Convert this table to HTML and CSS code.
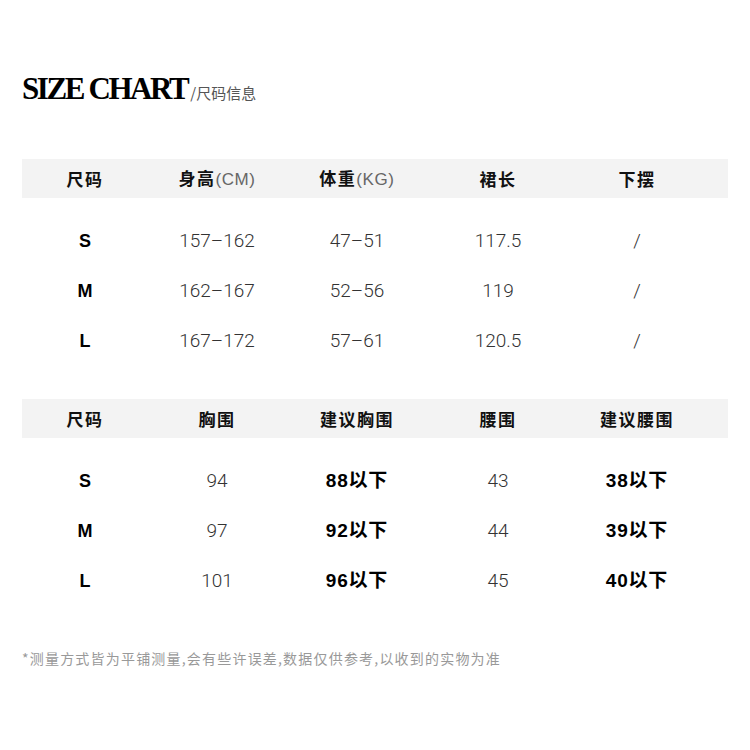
FILE: index.html
```html
<!DOCTYPE html>
<html lang="zh">
<head>
<meta charset="utf-8">
<title>Size Chart</title>
<link rel="stylesheet" href="styles.css">
</head>
<body>
<div class="page">
  <h1 class="title"><span class="title-en">SIZE CHART</span><span class="title-cn">/尺码信息</span></h1>

  <div class="table t1">
    <div class="row head">
      <div class="c">尺码</div>
      <div class="c">身高<span class="unit">(CM)</span></div>
      <div class="c">体重<span class="unit">(KG)</span></div>
      <div class="c">裙长</div>
      <div class="c">下摆</div>
    </div>
    <div class="body">
      <div class="row"><div class="c size">S</div><div class="c v">157–162</div><div class="c v">47–51</div><div class="c v">117.5</div><div class="c v">/</div></div>
      <div class="row"><div class="c size">M</div><div class="c v">162–167</div><div class="c v">52–56</div><div class="c v">119</div><div class="c v">/</div></div>
      <div class="row"><div class="c size">L</div><div class="c v">167–172</div><div class="c v">57–61</div><div class="c v">120.5</div><div class="c v">/</div></div>
    </div>
  </div>

  <div class="table t2">
    <div class="row head">
      <div class="c">尺码</div>
      <div class="c">胸围</div>
      <div class="c">建议胸围</div>
      <div class="c">腰围</div>
      <div class="c">建议腰围</div>
    </div>
    <div class="body">
      <div class="row"><div class="c size">S</div><div class="c v">94</div><div class="c b">88以下</div><div class="c v">43</div><div class="c b">38以下</div></div>
      <div class="row"><div class="c size">M</div><div class="c v">97</div><div class="c b">92以下</div><div class="c v">44</div><div class="c b">39以下</div></div>
      <div class="row"><div class="c size">L</div><div class="c v">101</div><div class="c b">96以下</div><div class="c v">45</div><div class="c b">40以下</div></div>
    </div>
  </div>

  <p class="note">*测量方式皆为平铺测量,会有些许误差,数据仅供参考,以收到的实物为准</p>
</div>
</body>
</html>
```

FILE: styles.css
```css
* { box-sizing: border-box; }
html, body { margin: 0; padding: 0; background: #fff; }
body {
  font-family: "Liberation Sans", "Noto Sans CJK SC", sans-serif;
  color: #111;
}
.page {
  width: 750px;
  height: 750px;
  padding: 71px 22px 0 22px;
}
.title {
  margin: 0;
  display: flex;
  align-items: baseline;
  line-height: 36px;
  font-weight: normal;
}
.title-en {
  font-family: "Liberation Serif", "DejaVu Serif", serif;
  font-weight: bold;
  font-size: 31px;
  letter-spacing: -2.4px;
  color: #000;
}
.title-cn {
  font-family: "Noto Sans CJK SC", sans-serif;
  font-size: 15px;
  color: #555;
  margin-left: 3px;
}
.t1 { margin-top: 48px; }
.t2 { margin-top: 33px; }
.row {
  display: grid;
  grid-template-columns: 126px 138px 142px 140px 138px;
  align-items: center;
}
.head {
  background: #f3f3f3;
  height: 39px;
  font-family: "Noto Sans CJK SC", sans-serif;
  font-weight: bold;
  font-size: 17px;
  color: #111;
}
.head .c { letter-spacing: 1.5px; }
.unit {
  font-family: "Liberation Sans", sans-serif;
  font-weight: normal;
  color: #666;
  font-size: 17px;
  letter-spacing: 0.6px;
}
.body { padding-top: 18px; }
.body .row { height: 50px; }
.c { text-align: center; line-height: 24px; }
.size {
  font-family: "Liberation Sans", sans-serif;
  font-weight: bold;
  font-size: 18px;
  color: #000;
}
.v {
  font-family: Roboto, "Liberation Sans", sans-serif;
  font-weight: 300;
  font-size: 19px;
  color: #333;
}
.b {
  font-family: "Liberation Sans", "Noto Sans CJK SC", sans-serif;
  font-weight: bold;
  font-size: 19px;
  letter-spacing: 0.8px;
  color: #000;
}
.note {
  margin: 42px 0 0 0;
  font-family: "Noto Sans CJK SC", sans-serif;
  font-size: 14px;
  letter-spacing: 1.2px;
  color: #999;
  line-height: 20px;
}
```
